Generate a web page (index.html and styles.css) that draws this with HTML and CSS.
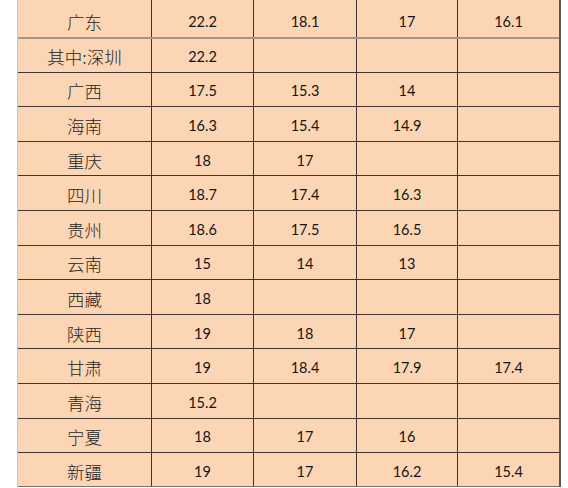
FILE: index.html
```html
<!DOCTYPE html>
<html lang="zh">
<head>
<meta charset="utf-8">
<link rel="stylesheet" href="styles.css">
</head>
<body>
<div class="sheet">
  <div class="row first"><div class="c name">广东</div><div class="c">22.2</div><div class="c">18.1</div><div class="c">17</div><div class="c">16.1</div></div>
  <div class="row second"><div class="c name">其中:深圳</div><div class="c">22.2</div><div class="c"></div><div class="c"></div><div class="c"></div></div>
  <div class="row"><div class="c name">广西</div><div class="c">17.5</div><div class="c">15.3</div><div class="c">14</div><div class="c"></div></div>
  <div class="row"><div class="c name">海南</div><div class="c">16.3</div><div class="c">15.4</div><div class="c">14.9</div><div class="c"></div></div>
  <div class="row"><div class="c name">重庆</div><div class="c">18</div><div class="c">17</div><div class="c"></div><div class="c"></div></div>
  <div class="row"><div class="c name">四川</div><div class="c">18.7</div><div class="c">17.4</div><div class="c">16.3</div><div class="c"></div></div>
  <div class="row"><div class="c name">贵州</div><div class="c">18.6</div><div class="c">17.5</div><div class="c">16.5</div><div class="c"></div></div>
  <div class="row"><div class="c name">云南</div><div class="c">15</div><div class="c">14</div><div class="c">13</div><div class="c"></div></div>
  <div class="row"><div class="c name">西藏</div><div class="c">18</div><div class="c"></div><div class="c"></div><div class="c"></div></div>
  <div class="row"><div class="c name">陕西</div><div class="c">19</div><div class="c">18</div><div class="c">17</div><div class="c"></div></div>
  <div class="row"><div class="c name">甘肃</div><div class="c">19</div><div class="c">18.4</div><div class="c">17.9</div><div class="c">17.4</div></div>
  <div class="row"><div class="c name">青海</div><div class="c">15.2</div><div class="c"></div><div class="c"></div><div class="c"></div></div>
  <div class="row"><div class="c name">宁夏</div><div class="c">18</div><div class="c">17</div><div class="c">16</div><div class="c"></div></div>
  <div class="row last"><div class="c name">新疆</div><div class="c">19</div><div class="c">17</div><div class="c">16.2</div><div class="c">15.4</div></div>
</div>
</body>
</html>
```
FILE: styles.css
```css
html, body {
  margin: 0;
  padding: 0;
  background: #ffffff;
}
.sheet {
  margin-left: 17px;
  width: 541px;
  border-left: 1px solid #c9c2cc;
  border-right: 2px solid #5a5452;
  background: #fcd5b4;
  font-family: Lato, "Noto Sans CJK SC", sans-serif;
  color: #151515;
}
.row {
  display: grid;
  grid-template-columns: 133px 102px 103px 101px 102px;
  height: 34.6px;
  box-sizing: border-box;
  border-top: 1px solid #3f3431;
}
.row.first {
  height: 37px;
  border-top: none;
}
.row.first .c {
  padding-top: 6px;
}
.row.second {
  border-top: 2px solid #a8948c;
}
.row.last {
  height: 35px;
  border-bottom: 1px solid #77706e;
}
.c {
  display: flex;
  align-items: center;
  justify-content: center;
  padding-top: 3px;
  box-sizing: border-box;
  font-size: 14.5px;
  border-left: 1px solid #3f3431;
}
.c.name {
  border-left: none;
  font-family: "Noto Sans CJK SC", sans-serif;
  font-size: 17.5px;
  font-weight: 300;
  color: #262626;
}
```
